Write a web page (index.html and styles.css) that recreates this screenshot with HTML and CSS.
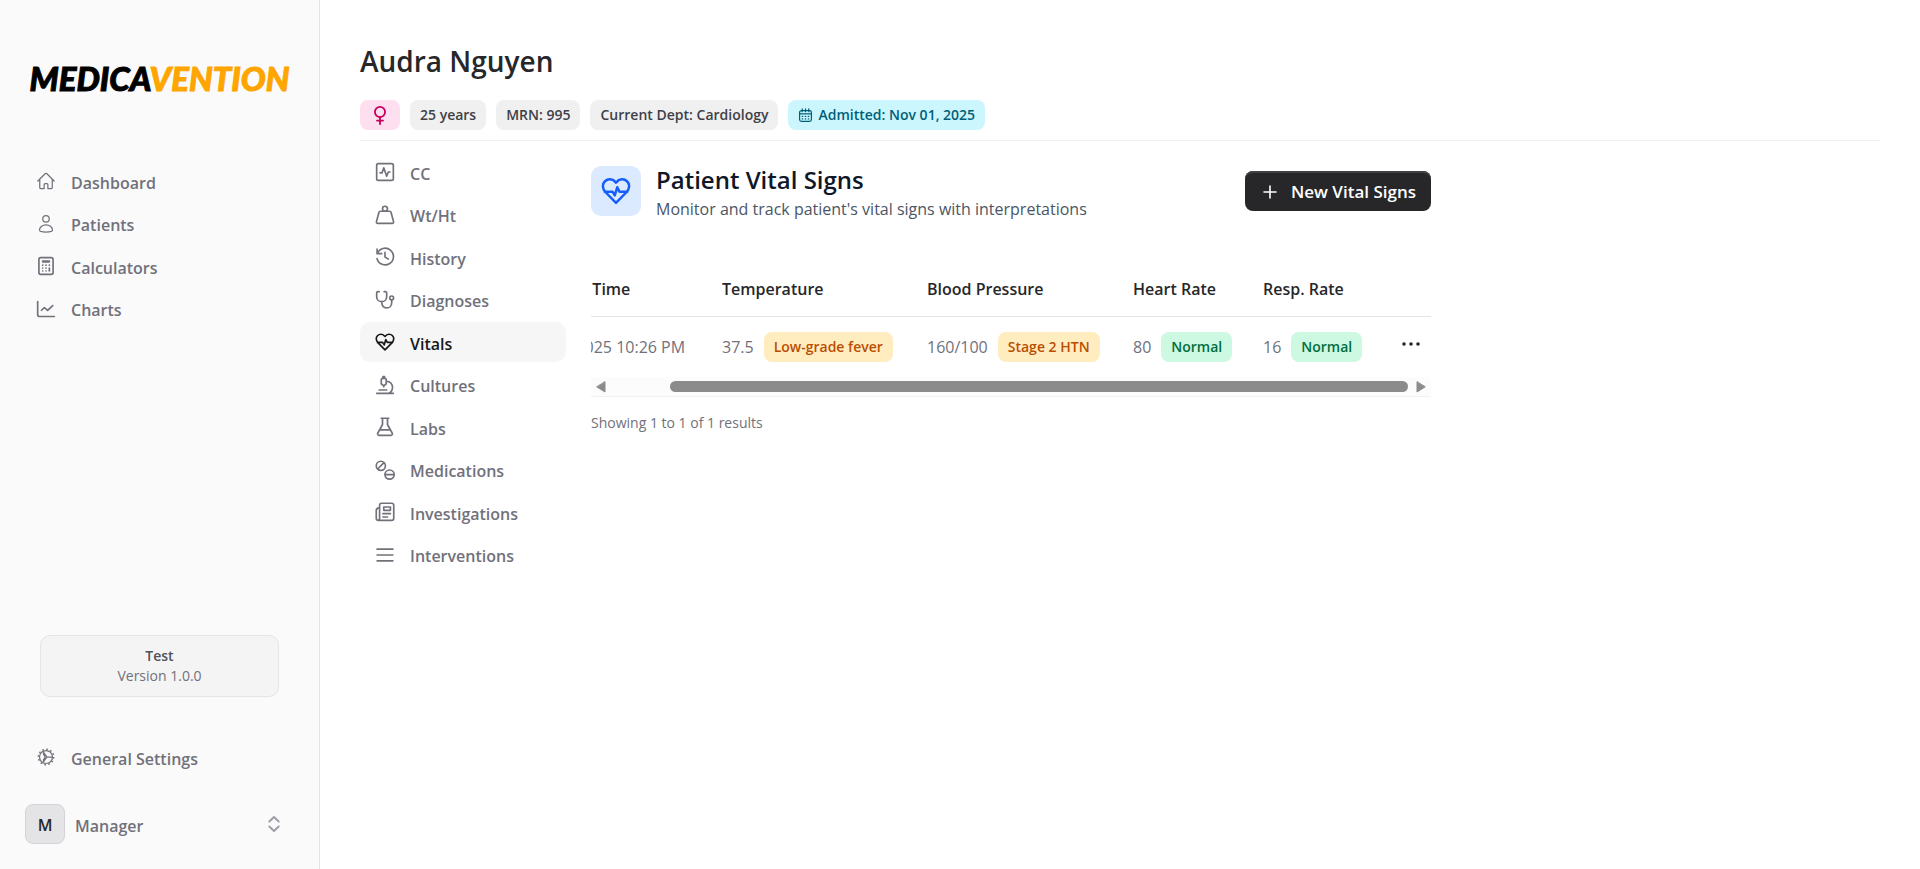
FILE: index.html
```html
<!DOCTYPE html>
<html lang="en">
<head>
<meta charset="utf-8">
<meta name="viewport" content="width=device-width, initial-scale=1">
<title>Audra Nguyen – Vital Signs</title>
<link rel="stylesheet" href="styles.css">
</head>
<body>
<div class="app">
  <aside class="sidebar">
    <a class="logo" href="#">MEDICA<span class="logo-accent">VENTION</span></a>
    <nav class="nav main-nav" aria-label="Main">
      <a href="#"><svg class="icon thin" viewBox="0 0 24 24"><path d="m2.25 12 8.95-8.95a1.1 1.1 0 0 1 1.6 0L21.75 12M4.5 9.75v10.1c0 .63.5 1.15 1.13 1.15H9.75v-4.9c0-.6.5-1.1 1.13-1.1h2.25c.62 0 1.12.5 1.12 1.1V21h4.13c.62 0 1.12-.5 1.12-1.13V9.75"/></svg><span>Dashboard</span></a>
      <a href="#"><svg class="icon thin" viewBox="0 0 24 24"><circle cx="12" cy="5.8" r="3.9"/><path d="M12 13c-4.6 0-7.8 3.1-7.8 6.2 0 1.500 3.300 2.500 7.800 2.500s7.800-1 7.800-2.500C19.800 16.100 16.600 13 12 13Z"/></svg><span>Patients</span></a>
      <a href="#"><svg class="icon" viewBox="0 0 24 24"><rect x="3.500" y="2" width="17" height="20" rx="2.200"/><path d="M8 6h8v1H8zM8 11h.1M12 11h.1M16 11h.1M8 14.500h.1M12 14.500h.1M8 18h.1M12 18h.1M16 14.500V18"/></svg><span>Calculators</span></a>
      <a href="#"><svg class="icon" viewBox="0 0 24 24"><path d="M2 3v15.500c0 1.400 1.100 2.500 2.500 2.500H22M6.500 13.500l3.500-3.200 4 3.400 6-5.700"/></svg><span>Charts</span></a>
    </nav>
    <div class="version"><strong>Test</strong><span>Version 1.0.0</span></div>
    <nav class="nav settings-nav" aria-label="Settings">
      <a href="#"><svg class="icon thin" viewBox="0 0 24 24"><circle cx="12" cy="12" r="7.800"/><circle cx="12" cy="12" r="9.200" stroke-width="1.800" stroke-linecap="butt" stroke-dasharray="2 2.817"/><path d="M13 12h6.800M12.600 11.300 8.200 5.200M12.600 12.700l-4.400 6.100M8.800 8.200 11 12l-2.200 3.800"/></svg><span>General Settings</span></a>
    </nav>
    <button class="profile" type="button">
      <span class="avatar">M</span><span class="profile-name">Manager</span>
      <svg class="icon chevrons" viewBox="0 0 20 20"><path d="M5.300 7.500 10 3l4.700 4.500M5.300 12.500 10 17l4.700-4.500"/></svg>
    </button>
  </aside>

  <main class="main">
    <header class="patient">
      <h1>Audra Nguyen</h1>
      <div class="chips">
        <span class="chip pink" aria-label="Female"><svg class="gender" viewBox="0 0 20 20"><circle cx="10" cy="7" r="5.100"/><path d="M10 12.100V19M7 15.600h6"/></svg></span>
        <span class="chip">25 years</span>
        <span class="chip">MRN: 995</span>
        <span class="chip">Current Dept: Cardiology</span>
        <span class="chip cyan"><svg class="calendar" viewBox="0 0 16 16"><rect x="1.700" y="2.700" width="12.600" height="11.600" rx="2"/><path d="M1.700 6.300h12.600M4.500 1v3M8 1v3M11.500 1v3M4.500 9h.6M7.700 9h.6M10.900 9h.6M4.500 11.700h.6M7.700 11.700h.6M10.900 11.700h.6"/></svg>Admitted: Nov 01, 2025</span>
      </div>
    </header>

    <div class="body">
      <nav class="nav record-nav" aria-label="Patient record">
        <a href="#"><svg class="icon" viewBox="0 0 24 24"><rect x="2" y="2" width="20" height="20" rx="2"/><path d="M6 13h2.500l2-6 3.500 10 2-5H18"/></svg><span>CC</span></a>
        <a href="#"><svg class="icon" viewBox="0 0 24 24"><circle cx="12" cy="4.500" r="3"/><path d="M6.300 7.500h11.400c.8 0 1.300.5 1.500 1.200L22.300 20c.3 1-.4 2-1.500 2H3.200c-1.100 0-1.800-1-1.500-2L4.800 8.700c.2-.7.700-1.200 1.500-1.200Z"/></svg><span>Wt/Ht</span></a>
        <a href="#"><svg class="icon" viewBox="0 0 24 24"><path d="M2.500 2.500V8H8M2.800 8A10 10 0 1 1 2.500 14M12 6.500V12l4 2.500"/></svg><span>History</span></a>
        <a href="#"><svg class="icon" viewBox="0 0 24 24"><path d="M5 2H3.500C2.500 2 2 2.700 2 3.500V8c0 3.300 2.600 6 6 6s6-2.700 6-6V3.500c0-.8-.5-1.500-1.500-1.500H11M8 14c.2 4.600 2.300 7.500 6 7.500 3.500 0 6-2.500 6-6V12"/><circle cx="20" cy="9.500" r="2.300"/></svg><span>Diagnoses</span></a>
        <a class="active" href="#" aria-current="page"><svg class="icon" viewBox="0 0 24 24"><path d="M12 21.500 3.700 13C.7 9.900 1 6.200 3.200 4.200 5.600 2 9.300 2 12 5.300 14.700 2 18.400 2 20.800 4.200c2.200 2 2.500 5.700-.5 8.800L12 21.500ZM3 12.500h6.200l1.800 3 2-6.500 1.700 3.500H21"/></svg><span>Vitals</span></a>
        <a href="#"><svg class="icon" viewBox="0 0 24 24"><path d="M2 22h20M5 18h9M9.500 2h2v2h-2zM10.500 14v-1M7.500 6c0-1.200.8-2 2-2h2c1.200 0 2 .8 2 2v4.500L10.500 13l-3-2.500V6ZM14 7.500c4 0 7 3.200 7 7.300 0 3-1.500 5.700-4 7.200"/></svg><span>Cultures</span></a>
        <a href="#"><svg class="icon" viewBox="0 0 24 24"><path d="M7.500 1.500h9M9 1.500V9L3.300 19.500c-.6 1.300.1 2.500 1.500 2.500h14.400c1.400 0 2.100-1.200 1.500-2.500L15 9V1.500M6.500 15.500h11"/></svg><span>Labs</span></a>
        <a href="#"><svg class="icon" viewBox="0 0 24 24"><circle cx="7" cy="7" r="5.500"/><circle cx="17.500" cy="17.500" r="5.500"/><path d="m3.500 10.500 7-7M12 17.500h11"/></svg><span>Medications</span></a>
        <a href="#"><svg class="icon" viewBox="0 0 24 24"><path d="M5.500 19.500V4c0-1.400 1.100-2.500 2.500-2.500h12c1.400 0 2.500 1.100 2.500 2.500v15.500c0 1.400-1.100 2.500-2.500 2.500H4c-1.400 0-2.500-1.100-2.500-2.500V10c0-1.700 1.300-3 4-3v12.500c0 1.500-.7 2.500-2 2.500M10.500 6h8v4h-8zM9.500 14h9M9.500 18H15"/></svg><span>Investigations</span></a>
        <a href="#"><svg class="icon" viewBox="0 0 24 24"><path d="M2.500 5h19M2.500 12h19M2.500 19h19"/></svg><span>Interventions</span></a>
      </nav>

      <section class="vitals">
        <div class="vitals-head">
          <span class="vitals-icon"><svg class="heart" viewBox="0 0 24 24"><path d="M12 21.500 3.700 13C.7 9.900 1 6.200 3.200 4.200 5.600 2 9.300 2 12 5.300 14.700 2 18.400 2 20.800 4.200c2.200 2 2.500 5.700-.5 8.800L12 21.500ZM3 12.500h6.200l1.800 3 2-6.500 1.700 3.500H21"/></svg></span>
          <div class="vitals-title">
            <h2>Patient Vital Signs</h2>
            <p>Monitor and track patient's vital signs with interpretations</p>
          </div>
          <button class="new-btn" type="button"><svg class="icon" viewBox="0 0 20 20"><path d="M10 4v12M4 10h12"/></svg>New Vital Signs</button>
        </div>

        <div class="table-view">
          <table>
            <colgroup><col class="col-time"><col class="col-temp"><col class="col-bp"><col class="col-rate"><col class="col-rate"><col class="col-actions"></colgroup>
            <thead>
              <tr><th>Recorded Time</th><th>Temperature</th><th>Blood Pressure</th><th>Heart Rate</th><th>Resp. Rate</th><th></th></tr>
            </thead>
            <tbody>
              <tr>
                <td>Nov 01, 2025 10:26 PM</td>
                <td><div class="reading">37.5 <span class="chip amber">Low-grade fever</span></div></td>
                <td><div class="reading">160/100 <span class="chip amber">Stage 2 HTN</span></div></td>
                <td><div class="reading">80 <span class="chip green">Normal</span></div></td>
                <td><div class="reading">16 <span class="chip green">Normal</span></div></td>
                <td><button class="more" type="button" aria-label="Row actions"><svg viewBox="0 0 20 20"><circle cx="3" cy="10" r="1.800"/><circle cx="10" cy="10" r="1.800"/><circle cx="17" cy="10" r="1.800"/></svg></button></td>
              </tr>
            </tbody>
          </table>
        </div>
        <div class="scrollbar" aria-hidden="true">
          <svg class="arrow" viewBox="0 0 10 12"><path d="M9 1v10L1 6Z"/></svg>
          <div class="track"><div class="thumb"></div></div>
          <svg class="arrow" viewBox="0 0 10 12"><path d="M1 1v10l8-5Z"/></svg>
        </div>
        <p class="summary">Showing 1 to 1 of 1 results</p>
      </section>
    </div>
  </main>
</div>
</body>
</html>
```
FILE: styles.css
```css
* { box-sizing: border-box; }

body {
  margin: 0;
  background: #fff;
  color: #27272a;
  font-family: "Open Sans", "Noto Sans", sans-serif;
  font-size: 16px;
  line-height: 24px;
}

h1, h2, p { margin: 0; font-weight: 600; }
a { color: inherit; text-decoration: none; }
button { font: inherit; color: inherit; border: 0; background: none; padding: 0; cursor: pointer; }
svg { flex: none; fill: none; stroke: currentColor; stroke-linecap: round; stroke-linejoin: round; }

.app { display: flex; min-height: 100vh; }

/* Sidebar */
.sidebar {
  display: flex;
  flex-direction: column;
  flex: none;
  width: 320px;
  padding: 54px 20px 20px;
  background: #fafafa;
  border-right: 1px solid #e4e4e7;
}

.logo {
  align-self: center;
  margin-bottom: 59px;
  color: #000;
  font-family: Lato, sans-serif;
  font-size: 33px;
  font-style: italic;
  font-weight: 900;
  line-height: 48px;
  -webkit-text-stroke: 1px currentColor;
}
.logo-accent { color: #ffa500; }

.icon { width: 20px; height: 20px; stroke-width: 2; }
.thin { stroke-width: 1.5; }

.nav { display: flex; flex-direction: column; color: #71717b; font-weight: 600; }
.nav a { display: flex; align-items: center; gap: 15px; height: 40px; padding: 0 16px; border-radius: 10px; }
.nav span { padding-top: 3px; }
.nav .active { background: #f6f6f6; color: #18181b; }
.main-nav { min-height: 168px; justify-content: space-between; }

.version {
  display: flex;
  flex-direction: column;
  margin: auto 20px 40px;
  padding: 10px;
  border: 1px solid #e4e4e7;
  border-radius: 10px;
  background: #f4f4f5;
  color: #71717b;
  font-size: 14px;
  line-height: 20px;
  text-align: center;
}
.version strong { color: #52525c; font-weight: 600; }

.profile { display: flex; align-items: center; gap: 10px; margin-top: 22px; padding: 5px 15px 5px 5px; color: #71717b; font-weight: 600; }
.profile-name { padding-top: 3px; }
.avatar {
  width: 40px;
  height: 40px;
  border: 1px solid #d4d4d8;
  border-radius: 8px;
  background: #e4e4e7;
  color: #27272a;
  line-height: 40px;
}
.chevrons { margin-left: auto; color: #9f9fa9; }

/* Patient header */
.main { flex: 1; min-width: 0; padding: 40px; }
.patient { padding-bottom: 10px; border-bottom: 1px solid #f1f1f2; }
.patient h1 { margin-bottom: 18px; font-size: 28px; line-height: 42px; }
.chips { display: flex; gap: 10px; }

.chip {
  display: inline-flex;
  align-items: center;
  gap: 5px;
  height: 30px;
  padding: 0 10px;
  border-radius: 8px;
  background: #f0f0f1;
  color: #3f3f46;
  font-size: 14px;
  font-weight: 600;
}
.pink { background: #fddff0; color: #c6005c; }
.cyan { background: #cbf6fe; color: #005f78; }
.amber { background: #ffedc0; color: #bb4d00; }
.green { background: #cdf8e1; color: #006e3f; }
.gender { width: 20px; height: 20px; stroke-width: 1.8; }
.calendar { width: 15px; height: 15px; stroke-width: 1.3; }

/* Record layout */
.body { display: flex; gap: 25px; padding-top: 11px; }
.record-nav { width: 206px; min-height: 423px; justify-content: space-between; }
.record-nav a { padding: 0 15px; }
.vitals { flex: 0 1 840px; min-width: 0; padding-top: 14px; }

.vitals-head { display: flex; align-items: flex-start; gap: 15px; margin-bottom: 39px; }
.vitals-icon { display: grid; place-items: center; width: 50px; height: 50px; border-radius: 10px; background: #dbeafe; color: #155dfc; }
.heart { width: 30px; height: 30px; stroke-width: 2; }
.vitals-title { flex: 1; }
.vitals-title h2 { color: #101828; font-size: 24px; line-height: 28px; }
.vitals-title p { color: #4a5565; font-weight: 400; line-height: 30px; }
.new-btn {
  display: flex;
  align-items: center;
  gap: 11px;
  height: 40px;
  margin-top: 5px;
  padding: 2px 15px 0;
  border-radius: 8px;
  background: #27272a;
  box-shadow: inset 0 2px 0 #414144;
  color: #fff;
  font-size: 17px;
  font-weight: 600;
}
.new-btn .icon { stroke-width: 1.6; }

.table-view { display: flex; justify-content: flex-end; overflow: hidden; }
table { flex: none; width: 916px; table-layout: fixed; border-collapse: collapse; white-space: nowrap; }
.col-time { width: 207px; }
.col-temp { width: 205px; }
.col-bp { width: 206px; }
.col-rate { width: 130px; }
th, td { padding: 0; text-align: left; }
th { height: 53px; border-bottom: 1px solid #e4e4e7; font-weight: 600; }
td { height: 61px; color: #71717b; font-weight: 400; }
.reading { display: flex; align-items: center; gap: 10px; }
.more { display: block; width: 20px; height: 20px; margin: 0 10px 6px auto; color: #27272a; }
.more svg { display: block; width: 20px; height: 20px; fill: currentColor; stroke: none; }

.scrollbar { display: flex; align-items: center; gap: 8px; height: 20px; padding: 0 5px; border-bottom: 1px solid #f1f1f2; background: #fcfcfc; }
.arrow { width: 10px; height: 12px; fill: #8b8b8b; stroke: #8b8b8b; }
.track { flex: 1; }
.thumb { width: 93%; height: 11px; margin-left: auto; border-radius: 6px; background: #8b8b8b; }
.summary { padding-top: 14px; color: #71717b; font-size: 14px; font-weight: 400; }
```
